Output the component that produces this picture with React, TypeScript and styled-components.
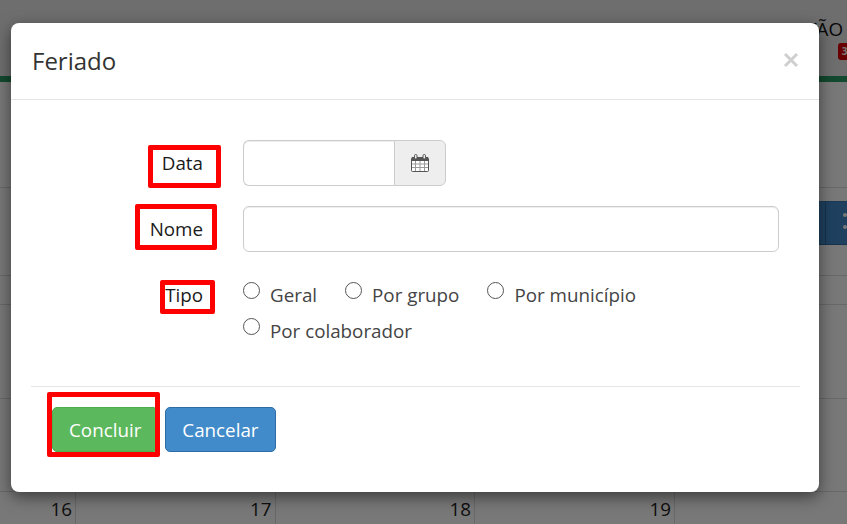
import React from 'react';
import styled, { createGlobalStyle } from 'styled-components';

const GlobalStyle = createGlobalStyle`
  html, body {
    margin: 0;
    padding: 0;
    height: 100%;
    overflow: hidden;
    background: #fff;
    font-family: 'Open Sans', 'Liberation Sans', sans-serif;
  }
  * { box-sizing: border-box; }
`;

const Page = styled.div`
  position: relative;
  width: 847px;
  height: 524px;
  overflow: hidden;
  background: #fff;
`;

/* what sits behind the dialog */
const TopBar = styled.div`
  height: 76px;
  display: flex;
  justify-content: flex-end;
  gap: 42px;
  padding: 17px 4px 0 0;
  font-size: 18.8px;
  line-height: 24px;
  color: #111;
  background: #e9e9e9;
`;

const MenuItem = styled.span`
  position: relative;
  white-space: nowrap;
`;

const Badge = styled.span`
  position: absolute;
  top: 26px;
  left: 66px;
  width: 20px;
  height: 17px;
  border-radius: 3px;
  background: #e00000;
  color: #fff;
  font-size: 10px;
  font-weight: 700;
  line-height: 17px;
  padding-left: 4px;
`;

const GreenLine = styled.div`
  height: 6px;
  background: #2a9c63;
`;

const CalendarRow = styled.div<{ $height: number }>`
  height: ${(p) => p.$height}px;
  border-bottom: 1px solid #ddd;
`;

const BlueRow = styled.div`
  height: 88px;
  padding-top: 13px;
  border-bottom: 1px solid #ddd;
`;

const BlueHeader = styled.div`
  height: 44px;
  margin-left: 819px;
  display: flex;
  background: #428bca;
  border-top: 1px solid #3a7cb5;
  border-bottom: 1px solid #2f6aa5;
`;

const BlueCell = styled.div`
  width: 9px;
  border-right: 1px solid #2f6aa5;
`;

const SortDots = styled.div`
  display: flex;
  flex-direction: column;
  gap: 8px;
  margin: 11px 0 0 17px;
`;

const Dot = styled.span`
  width: 4px;
  height: 4px;
  border-radius: 50%;
  background: #fff;
`;

const DayRow = styled.div`
  display: grid;
  grid-template-columns: 76px 199.5px 199.5px 200px 1fr;
  height: 33px;
`;

const DayCell = styled.div`
  border-right: 1px solid #ddd;
  text-align: right;
  padding: 3px 3px 0 0;
  font-size: 18.8px;
  line-height: 28px;
  color: #222;
`;

const Backdrop = styled.div`
  position: absolute;
  inset: 0;
  background: rgba(0, 0, 0, 0.53);
`;

/* dialog */
const Modal = styled.div`
  position: absolute;
  left: 11px;
  top: 23px;
  width: 808px;
  height: 469px;
  background: #fff;
  border-radius: 8px;
  box-shadow: 0 5px 15px rgba(0, 0, 0, 0.5);
`;

const ModalHeader = styled.header`
  height: 77px;
  display: flex;
  align-items: center;
  justify-content: space-between;
  padding: 0 20px 0 21px;
  border-bottom: 1px solid #e5e5e5;
`;

const Title = styled.h4`
  margin: 0;
  font-size: 24px;
  font-weight: 400;
  line-height: 30px;
  color: #333;
`;

const Close = styled.button`
  border: 0;
  padding: 0;
  background: none;
  width: 16px;
  height: 16px;
  margin-bottom: 2px;
  display: flex;
  color: #cfcfcf;
`;

const Form = styled.div`
  display: grid;
  grid-template-columns: 192px 536px;
  column-gap: 40px;
  padding: 40px 0 0 0;
  row-gap: 20px;
`;

const Label = styled.label`
  justify-self: end;
  padding-top: 11px;
  font-size: 18.8px;
  font-weight: 500;
  line-height: 24px;
  color: #1a1a1a;
`;

const InputGroup = styled.div`
  display: flex;
  width: 203px;
  height: 46px;
`;

const DateInput = styled.input`
  width: 151px;
  height: 46px;
  border: 1px solid #ccc;
  border-right: 0;
  border-radius: 6px 0 0 6px;
  box-shadow: inset 0 1px 1px rgba(0, 0, 0, 0.075);
  background: #fff;
`;

const Addon = styled.span`
  flex: 1;
  display: flex;
  align-items: center;
  justify-content: center;
  background: #eee;
  border: 1px solid #ccc;
  border-radius: 0 6px 6px 0;
  color: #555;
`;

const TextInput = styled.input`
  width: 536px;
  height: 46px;
  border: 1px solid #ccc;
  border-radius: 6px;
  box-shadow: inset 0 1px 1px rgba(0, 0, 0, 0.075);
  background: #fff;
`;

const RadioList = styled.div`
  display: flex;
  flex-wrap: wrap;
  column-gap: 28px;
  row-gap: 12px;
  padding-top: 11px;
  width: 420px;
`;

const RadioOption = styled.label`
  display: flex;
  align-items: flex-start;
  gap: 10px;
  font-size: 18.8px;
  line-height: 24px;
  color: #444;
  white-space: nowrap;
`;

const RadioMark = styled.input`
  appearance: none;
  width: 17px;
  height: 17px;
  margin: -1px 0 0;
  border: 1px solid #555;
  border-radius: 50%;
  background: #fff;
`;

const Divider = styled.hr`
  margin: 43px 19px 0 20px;
  border: 0;
  border-top: 1px solid #e5e5e5;
`;

const Footer = styled.footer`
  display: flex;
  gap: 7px;
  padding: 20px 0 0 41px;
`;

const Button = styled.button<{ $variant: 'success' | 'primary' }>`
  height: 45px;
  padding: 0 16px;
  border-radius: 5px;
  border: 1px solid ${(p) => (p.$variant === 'success' ? '#4cae4c' : '#2e6da4')};
  background: ${(p) => (p.$variant === 'success' ? '#5cb85c' : '#428bca')};
  color: #fff;
  font-family: inherit;
  font-size: 18.8px;
  line-height: 24px;
`;

/* red annotation frames drawn on top of the screenshot */
const Highlight = styled.span<{ $x: number; $y: number; $w: number; $h: number }>`
  position: absolute;
  left: ${(p) => p.$x}px;
  top: ${(p) => p.$y}px;
  width: ${(p) => p.$w}px;
  height: ${(p) => p.$h}px;
  border: 5px solid #ff0000;
  border-radius: 2px;
  pointer-events: none;
`;

const CalendarIcon = () => (
  <svg width="18" height="18" viewBox="0 0 18 18" fill="none">
    <rect x="0.5" y="3.5" width="17" height="14" rx="1" fill="#fff" stroke="#555" />
    <rect x="1" y="3" width="16" height="4" fill="#555" />
    <path d="M1 10h16M1 13.5h16M4.5 7v10M9 7v10M13.5 7v10" stroke="#999" />
    <rect x="3.5" y="0.5" width="2.5" height="4.5" rx="1.2" fill="#eee" stroke="#555" />
    <rect x="12" y="0.5" width="2.5" height="4.5" rx="1.2" fill="#eee" stroke="#555" />
  </svg>
);

const CloseIcon = () => (
  <svg width="16" height="16" viewBox="0 0 16 16" stroke="currentColor" strokeWidth="3">
    <path d="M2 2l12 12M14 2L2 14" />
  </svg>
);

const options = ['Geral', 'Por grupo', 'Por município', 'Por colaborador'];

const App: React.FC = () => {
  return (
    <Page>
      <GlobalStyle />
      <TopBar>
        <MenuItem>FINANÇAS</MenuItem>
        <MenuItem>DASHBOARD</MenuItem>
        <MenuItem>
          GESTÃO
          <Badge>3</Badge>
        </MenuItem>
      </TopBar>
      <GreenLine />
      <CalendarRow $height={106} />
      <BlueRow>
        <BlueHeader>
          <BlueCell />
          <SortDots>
            <Dot />
            <Dot />
          </SortDots>
        </BlueHeader>
      </BlueRow>
      <CalendarRow $height={29} />
      <CalendarRow $height={94} />
      <CalendarRow $height={93} />
      <DayRow>
        <DayCell>16</DayCell>
        <DayCell>17</DayCell>
        <DayCell>18</DayCell>
        <DayCell>19</DayCell>
      </DayRow>
      <Backdrop />

      <Modal>
        <ModalHeader>
          <Title>Feriado</Title>
          <Close aria-label="Fechar">
            <CloseIcon />
          </Close>
        </ModalHeader>
        <Form>
          <Label>Data</Label>
          <InputGroup>
            <DateInput />
            <Addon>
              <CalendarIcon />
            </Addon>
          </InputGroup>
          <Label>Nome</Label>
          <TextInput />
          <Label>Tipo</Label>
          <RadioList>
            {options.map((option) => (
              <RadioOption key={option}>
                <RadioMark type="radio" name="tipo" />
                {option}
              </RadioOption>
            ))}
          </RadioList>
        </Form>
        <Divider />
        <Footer>
          <Button $variant="success">Concluir</Button>
          <Button $variant="primary">Cancelar</Button>
        </Footer>
        <Highlight $x={137} $y={122} $w={73} $h={43} />
        <Highlight $x={124} $y={181} $w={82} $h={46} />
        <Highlight $x={149} $y={257} $w={55} $h={34} />
        <Highlight $x={36} $y={369} $w={113} $h={65} />
      </Modal>
    </Page>
  );
};

export default App;
